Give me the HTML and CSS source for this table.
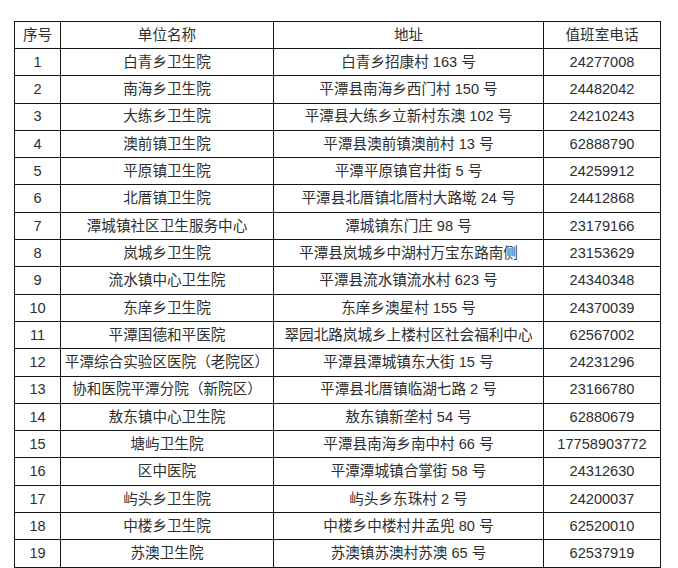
FILE: index.html
```html
<!DOCTYPE html>
<html lang="zh-CN">
<head>
<meta charset="utf-8">
<title>值班室电话</title>
<link rel="stylesheet" href="styles.css">
</head>
<body>
<table class="duty">
<colgroup>
<col class="c-no"><col class="c-name"><col class="c-addr"><col class="c-tel">
</colgroup>
<thead>
<tr><th>序号</th><th>单位名称</th><th>地址</th><th>值班室电话</th></tr>
</thead>
<tbody>
<tr><td>1</td><td>白青乡卫生院</td><td>白青乡招康村 163 号</td><td>24277008</td></tr>
<tr><td>2</td><td>南海乡卫生院</td><td>平潭县南海乡西门村 150 号</td><td>24482042</td></tr>
<tr><td>3</td><td>大练乡卫生院</td><td>平潭县大练乡立新村东澳 102 号</td><td>24210243</td></tr>
<tr><td>4</td><td>澳前镇卫生院</td><td>平潭县澳前镇澳前村 13 号</td><td>62888790</td></tr>
<tr><td>5</td><td>平原镇卫生院</td><td>平潭平原镇官井街 5 号</td><td>24259912</td></tr>
<tr><td>6</td><td>北厝镇卫生院</td><td>平潭县北厝镇北厝村大路墘 24 号</td><td>24412868</td></tr>
<tr><td>7</td><td>潭城镇社区卫生服务中心</td><td>潭城镇东门庄 98 号</td><td>23179166</td></tr>
<tr><td>8</td><td>岚城乡卫生院</td><td>平潭县岚城乡中湖村万宝东路南侧</td><td>23153629</td></tr>
<tr><td>9</td><td>流水镇中心卫生院</td><td>平潭县流水镇流水村 623 号</td><td>24340348</td></tr>
<tr><td>10</td><td>东庠乡卫生院</td><td>东庠乡澳星村 155 号</td><td>24370039</td></tr>
<tr><td>11</td><td>平潭国德和平医院</td><td>翠园北路岚城乡上楼村区社会福利中心</td><td>62567002</td></tr>
<tr><td>12</td><td>平潭综合实验区医院（老院区）</td><td>平潭县潭城镇东大街 15 号</td><td>24231296</td></tr>
<tr><td>13</td><td>协和医院平潭分院（新院区）</td><td>平潭县北厝镇临湖七路 2 号</td><td>23166780</td></tr>
<tr><td>14</td><td>敖东镇中心卫生院</td><td>敖东镇新垄村 54 号</td><td>62880679</td></tr>
<tr><td>15</td><td>塘屿卫生院</td><td>平潭县南海乡南中村 66 号</td><td>17758903772</td></tr>
<tr><td>16</td><td>区中医院</td><td>平潭潭城镇合掌街 58 号</td><td>24312630</td></tr>
<tr><td>17</td><td>屿头乡卫生院</td><td>屿头乡东珠村 2 号</td><td>24200037</td></tr>
<tr><td>18</td><td>中楼乡卫生院</td><td>中楼乡中楼村井孟兜 80 号</td><td>62520010</td></tr>
<tr><td>19</td><td>苏澳卫生院</td><td>苏澳镇苏澳村苏澳 65 号</td><td>62537919</td></tr>
</tbody>
</table>
</body>
</html>
```
FILE: styles.css
```css
html, body {
  margin: 0;
  background: #ffffff;
}
body {
  padding: 21px 0 0 14px;
  font-family: "Liberation Sans", "Noto Sans CJK SC", sans-serif;
  font-size: 14.6px;
  color: #2e2e2e;
}
.duty {
  border-collapse: collapse;
  table-layout: fixed;
  width: 646px;
}
.c-no { width: 46px; }
.c-name { width: 213px; }
.c-addr { width: 270px; }
.c-tel { width: 117px; }
.duty th,
.duty td {
  border: 1px solid #151515;
  padding: 0;
  height: 26.3px;
  text-align: center;
  vertical-align: middle;
  font-weight: normal;
  white-space: nowrap;
  line-height: 1;
}
.duty th {
  height: 26px;
}
```
